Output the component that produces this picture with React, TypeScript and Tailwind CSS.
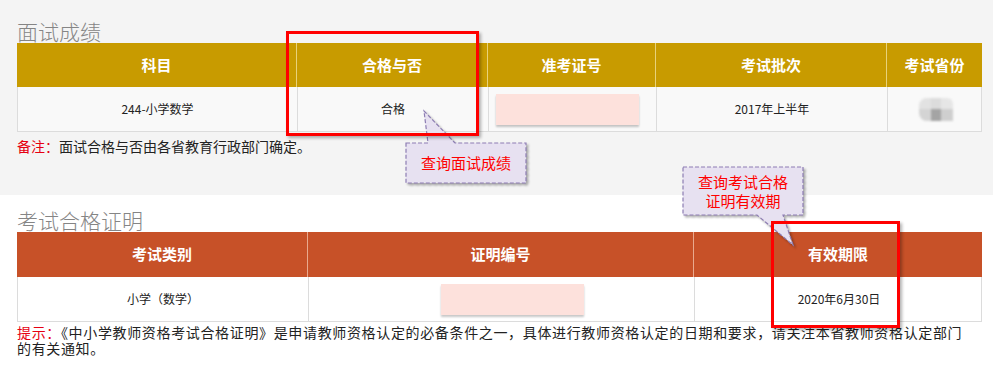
import React from "react";

const font = { fontFamily: '"Noto Sans CJK SC", "Noto Sans", sans-serif' };
const tightFont = { fontFamily: '"Liberation Sans", "Noto Sans CJK SC", sans-serif' };

function PinkBox() {
  return <div className="w-[143px] h-[31px] bg-[#fde1dc] shadow-[0_2px_2px_rgba(0,0,0,0.22)]" />;
}

function Blur() {
  return (
    <div className="grid grid-cols-[12px_10px_12px] grid-rows-[11px_12px] blur-[0.8px]">
      <div className="bg-[#e2e2e2] rounded-tl-[8px]" />
      <div className="bg-[#dcdcdc]" />
      <div className="bg-[#e6e6e6] rounded-tr-[6px]" />
      <div className="bg-[#d4d4d4] rounded-bl-[8px]" />
      <div className="bg-[#a4a4a4]" />
      <div className="bg-[#cfcfcf]" />
    </div>
  );
}

export default function App() {
  return (
    <div className="relative w-[993px] h-[376px] overflow-hidden bg-white text-[#222]" style={font}>
      {/* Section 1 */}
      <div className="h-[195px] bg-[#f4f4f4] pl-[17px] pt-[19px]">
        <div className="h-[24px] leading-[24px] text-[21px] text-[#858585] font-light">面试成绩</div>
        <div className="w-[965px]">
          <div className="grid grid-cols-[279px_191px_168px_231px_96px] h-[44px] bg-[#c89b00] text-white font-bold text-[15px]">
            <div className="flex items-center justify-center">科目</div>
            <div className="flex items-center justify-center border-l border-[#e8d27a]">合格与否</div>
            <div className="flex items-center justify-center border-l border-[#e8d27a]">准考证号</div>
            <div className="flex items-center justify-center border-l border-[#e8d27a]">考试批次</div>
            <div className="flex items-center justify-center border-l border-[#e8d27a]">考试省份</div>
          </div>
          <div className="grid grid-cols-[279px_191px_168px_231px_96px] h-[45px] bg-[#f9f9f9] border border-t-0 border-[#dcdcdc] text-[12px]">
            <div className="flex items-center justify-center">244-小学数学</div>
            <div className="flex items-center justify-center border-l border-[#dcdcdc]">合格</div>
            <div className="flex items-center justify-start pl-[7px] border-l border-[#dcdcdc]"><PinkBox /></div>
            <div className="flex items-center justify-center border-l border-[#dcdcdc]">2017年上半年</div>
            <div className="flex items-center justify-center border-l border-[#dcdcdc]"><Blur /></div>
          </div>
        </div>
        <div className="mt-[4px] leading-[20px] text-[14px]">
          <span className="text-[#e60012]">备注：</span>面试合格与否由各省教育行政部门确定。
        </div>
      </div>

      {/* Section 2 */}
      <div className="pl-[17px] pt-[13px]">
        <div className="h-[24px] leading-[24px] text-[21px] text-[#858585] font-light">考试合格证明</div>
        <div className="w-[965px]">
          <div className="grid grid-cols-[290px_386px_289px] h-[45px] bg-[#c75128] text-white font-bold text-[15px]">
            <div className="flex items-center justify-center">考试类别</div>
            <div className="flex items-center justify-center border-l border-[#e9a98e]">证明编号</div>
            <div className="flex items-center justify-center border-l border-[#e9a98e]">有效期限</div>
          </div>
          <div className="grid grid-cols-[290px_386px_289px] h-[45px] bg-white border border-t-0 border-[#dcdcdc] text-[12px]">
            <div className="flex items-center justify-center">小学（数学）</div>
            <div className="flex items-center justify-start pl-[132px] border-l border-[#dcdcdc]"><PinkBox /></div>
            <div className="flex items-center justify-center border-l border-[#dcdcdc]">2020年6月30日</div>
          </div>
        </div>
        <div className="mt-[3px] text-[14px] leading-[16px] tracking-[0.65px] whitespace-nowrap" style={tightFont}>
          <div><span className="text-[#e60012]">提示：</span>《中小学教师资格考试合格证明》是申请教师资格认定的必备条件之一，具体进行教师资格认定的日期和要求，请关注本省教师资格认定部门</div>
          <div>的有关通知。</div>
        </div>
      </div>

      {/* Callout 1 */}
      <svg className="absolute left-[400px] top-[105px] drop-shadow-[2px_2px_1px_rgba(0,0,0,0.3)]" width="135" height="85" viewBox="0 0 135 85">
        <path d="M6,38 L28,38 L24,6 L55,38 L126,38 L126,78 L6,78 Z" fill="#e7e1f1" stroke="#8d7db3" strokeWidth="1.2" strokeDasharray="4 2" />
      </svg>
      <div className="absolute left-[406px] top-[143px] w-[120px] h-[40px] flex items-center justify-center text-[15px] text-[#ff0000]">
        查询面试成绩
      </div>

      {/* Callout 2 */}
      <svg className="absolute left-[677px] top-[160px] drop-shadow-[2px_2px_1px_rgba(0,0,0,0.3)]" width="135" height="95" viewBox="0 0 135 95">
        <path d="M6,7 L126,7 L126,55 L106,55 L116,85 L80,55 L6,55 Z" fill="#e7e1f1" stroke="#8d7db3" strokeWidth="1.2" strokeDasharray="4 2" />
      </svg>
      <div className="absolute left-[683px] top-[167px] w-[120px] h-[48px] flex flex-col items-center justify-center text-[15px] leading-[19px] text-[#ff0000]">
        <div>查询考试合格</div>
        <div>证明有效期</div>
      </div>

      {/* Red boxes */}
      <div className="absolute left-[286px] top-[31px] w-[193px] h-[105px] border-[3px] border-[#ff0000] shadow-[2px_2px_3px_rgba(0,0,0,0.3)]" />
      <div className="absolute left-[771px] top-[221px] w-[129px] h-[107px] border-[3px] border-[#ff0000] shadow-[2px_2px_3px_rgba(0,0,0,0.3)]" />
    </div>
  );
}
